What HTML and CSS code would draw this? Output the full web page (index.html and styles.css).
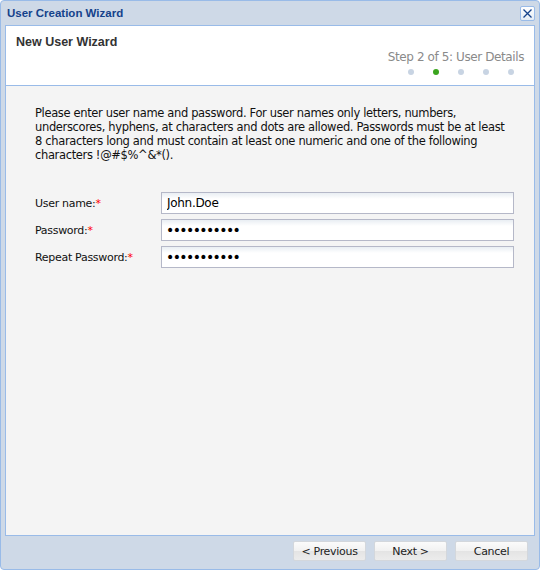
FILE: index.html
```html
<!DOCTYPE html>
<html>
<head>
<meta charset="utf-8">
<link rel="stylesheet" href="styles.css">
</head>
<body>
<div class="window">
  <div class="titlebar">
    <span class="title">User Creation Wizard</span>
    <span class="close"><svg width="11" height="11" viewBox="0 0 11 11"><path d="M1.5 1.5 L9.5 9.5 M9.5 1.5 L1.5 9.5" stroke="#15428b" stroke-width="1.3" fill="none"/></svg></span>
  </div>
  <div class="panel">
    <div class="wiz-head">
      <div class="wiz-title">New User Wizard</div>
      <div class="steps">
        <div class="step-label">Step 2 of 5: User Details</div>
        <div class="dots">
          <span class="dot"></span>
          <span class="dot active"></span>
          <span class="dot"></span>
          <span class="dot"></span>
          <span class="dot"></span>
        </div>
      </div>
    </div>
    <div class="content">
      <p class="intro">Please enter user name and password. For user names only letters, numbers, underscores, hyphens, at characters and dots are allowed. Passwords must be at least 8 characters long and must contain at least one numeric and one of the following characters !@#$%^&amp;*().</p>
      <div class="form">
        <div class="row">
          <label class="lbl">User name:<span class="req">*</span></label>
          <input class="field" type="text" value="John.Doe">
        </div>
        <div class="row">
          <label class="lbl">Password:<span class="req">*</span></label>
          <input class="field pw" type="password" value="abcdefghijk">
        </div>
        <div class="row">
          <label class="lbl">Repeat Password:<span class="req">*</span></label>
          <input class="field pw" type="password" value="abcdefghijk">
        </div>
      </div>
    </div>
  </div>
  <div class="footer">
    <button class="btn">&lt; Previous</button>
    <button class="btn">Next &gt;</button>
    <button class="btn">Cancel</button>
  </div>
</div>
</body>
</html>
```
FILE: styles.css
```css
* { box-sizing: border-box; }
html, body { margin: 0; padding: 0; }
body {
  width: 540px;
  height: 570px;
  font-family: "DejaVu Sans", Verdana, sans-serif;
  font-size: 11px;
  background: #fff;
}
.window {
  width: 540px;
  height: 570px;
  border: 1px solid #99bbe8;
  border-radius: 4px;
  background: #ced9e7;
  display: flex;
  flex-direction: column;
}
.titlebar {
  height: 24px;
  display: flex;
  align-items: center;
  justify-content: space-between;
  padding: 0 4px 0 6px;
}
.title {
  font-family: "Liberation Sans", Arial, sans-serif;
  font-weight: bold;
  font-size: 11.5px;
  color: #15428b;
}
.close {
  width: 15px;
  height: 15px;
  border: 1px solid #99bbe8;
  border-radius: 2px;
  background: linear-gradient(#ffffff, #e3ebf5);
  display: flex;
  align-items: center;
  justify-content: center;
}
.close svg { display: block; }
.panel {
  margin: 0 4px;
  border: 1px solid #99bbe8;
  flex: 1;
  display: flex;
  flex-direction: column;
}
.wiz-head {
  height: 60px;
  background: #fff;
  border-bottom: 1px solid #99bbe8;
  padding: 9px 10px 0 10px;
  position: relative;
}
.wiz-title {
  font-family: "Liberation Sans", Arial, sans-serif;
  font-weight: bold;
  font-size: 12.5px;
  color: #333;
}
.steps {
  position: absolute;
  right: 10px;
  top: 24px;
  display: flex;
  flex-direction: column;
  align-items: flex-end;
}
.step-label {
  color: #8a8a8a;
  font-size: 12px;
  letter-spacing: -0.4px;
}
.dots {
  display: flex;
  gap: 19px;
  margin-top: 5px;
  padding-right: 10px;
}
.dot {
  width: 6px;
  height: 6px;
  border-radius: 50%;
  background: #c8d4e3;
}
.dot.active { background: #3aa51e; }
.content {
  flex: 1;
  background: #f4f4f4;
  padding: 20px 19px 0 29px;
}
.intro {
  margin: 0;
  font-size: 11.5px;
  line-height: 14px;
  color: #111;
  letter-spacing: -0.35px;
  width: 472px;
}
.form {
  margin-top: 30px;
  display: flex;
  flex-direction: column;
  gap: 5px;
}
.row {
  display: flex;
  align-items: center;
  height: 22px;
}
.lbl {
  width: 126px;
  flex: none;
  font-size: 11px;
  color: #111;
  letter-spacing: -0.3px;
}
.req { color: #ff0000; }
.field {
  width: 353px;
  flex: none;
  height: 22px;
  border: 1px solid #b5b8c8;
  background: linear-gradient(#e9eef3, #fff 6px);
  padding: 0 5px;
  font-family: "DejaVu Sans", Verdana, sans-serif;
  font-size: 12px;
  color: #000;
  letter-spacing: -0.3px;
  outline: none;
}
.field.pw {
  font-size: 14px;
  letter-spacing: -1.6px;
  padding-left: 4px;
}
.footer {
  height: 33px;
  display: flex;
  justify-content: flex-end;
  gap: 8px;
  padding: 5px 11px 0 0;
}
.btn {
  width: 73px;
  height: 20px;
  border: 1px solid #d3d7dc;
  border-radius: 2px;
  background: linear-gradient(#fbfbfb 0%, #f1f1f1 50%, #e4e4e4 51%, #ececec 100%);
  font-family: "DejaVu Sans", Verdana, sans-serif;
  font-size: 11px;
  color: #222;
  letter-spacing: -0.3px;
  padding: 0;
}
```
